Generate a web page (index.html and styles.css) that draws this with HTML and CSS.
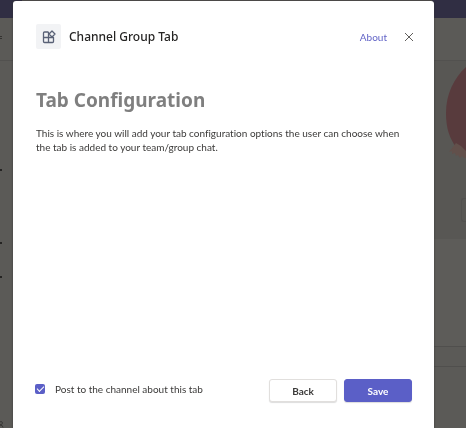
FILE: index.html
```html
<!DOCTYPE html>
<html lang="en">
<head>
<meta charset="utf-8">
<meta name="viewport" content="width=device-width, initial-scale=1">
<title>Channel Group Tab</title>
<link rel="stylesheet" href="styles.css">
</head>
<body>
<div class="backdrop" aria-hidden="true">
  <div class="topbar"><div class="search"></div></div>
  <div class="toolbar"><span class="toolbar-mark"></span></div>
  <div class="workspace">
    <div class="rail">
      <span class="mark mark-one"></span>
      <span class="mark mark-two"></span>
      <span class="mark mark-three"></span>
      <svg class="person" viewBox="0 0 4 7"><path d="M0 .8Q2.5 0 2.5 2T0 3.5M0 4.2Q3 4 3 6.5" fill="none" stroke="#3a3937"/></svg>
    </div>
    <div class="stage">
      <svg class="balloon" viewBox="0 0 32 120">
        <path d="M32 6C20 17 12 33 12 52C12 68 16 78 22 86C25 90 28 94 32 97Z" fill="#583b3d"/>
        <path d="M22 82L27 85L32 90V97L30 97L28 95L26 97L24 94L22 95L21 92L18 93L18 90L15 91Z" fill="#62504b"/>
      </svg>
      <div class="tile"></div>
    </div>
    <div class="feed"></div>
    <div class="compose"></div>
  </div>
</div>
<main class="dialog" role="dialog" aria-labelledby="app-name">
  <header class="dialog-header">
    <span class="app-icon">
      <svg viewBox="0 0 14 14" fill="none" stroke="#596176" stroke-width="1.3" stroke-linejoin="round">
        <path d="M6.500 2H2.500Q1.500 2 1.500 3V11.500Q1.500 12.500 2.500 12.500H10.500Q11.500 12.500 11.500 11.500V7.500H1.500M6.500 2V12.500"/>
        <path d="M10 1L13 4L10 7L7 4Z" fill="#f2f3f5"/>
      </svg>
    </span>
    <h1 class="app-name" id="app-name">Channel Group Tab</h1>
    <a class="about" href="#about">About</a>
    <button class="close" type="button" aria-label="Close">
      <svg viewBox="0 0 10 10"><path d="M1 1L9 9M9 1L1 9" stroke="#605e5c" stroke-width="1"/></svg>
    </button>
  </header>
  <section class="content">
    <h2 class="title">Tab Configuration</h2>
    <p class="description">This is where you will add your tab configuration options the user can choose when the tab is added to your team/group chat.</p>
  </section>
  <footer class="dialog-footer">
    <label class="post" for="post"><input class="check" type="checkbox" id="post" checked>Post to the channel about this tab</label>
    <button class="button" type="button">Back</button>
    <button class="button primary" type="button">Save</button>
  </footer>
</main>
</body>
</html>
```
FILE: styles.css
```css
* { box-sizing: border-box; }
body {
  margin: 0;
  font-family: Lato, "Open Sans", sans-serif;
  font-size: 10px;
  line-height: 14px;
  font-variant-ligatures: none;
  color: #3b3a39;
  background: #5b5a57;
  overflow: hidden;
}
.backdrop { display: flex; flex-direction: column; height: 100vh; }
.topbar { height: 18px; padding: 0 34px 0 22px; background: #302e43; }
.search { height: 6px; background: #55524f; }
.toolbar { height: 43px; padding-top: 18px; background: #5b5a57; border-bottom: 1px solid #52514f; }
.toolbar-mark { display: block; width: 2px; height: 3px; border-top: 1px solid #343331; border-bottom: 1px solid #343331; }
.workspace {
  flex: 1;
  display: grid;
  grid-template-columns: 13px 1fr 32px;
  grid-template-rows: 178px 107px 21px 1fr;
}
.rail { grid-column: 1; grid-row: 1 / -1; display: flex; flex-direction: column; }
.mark { width: 2px; height: 2px; background: #242322; }
.mark-one { margin-top: 108px; }
.mark-two { margin-top: 71px; }
.mark-three { margin-top: 32px; }
.person { width: 4px; height: 7px; margin-top: auto; }
.stage { grid-column: 3; grid-row: 1; display: flex; flex-direction: column; background: #585754; }
.balloon { width: 32px; height: 120px; }
.tile { width: 5px; height: 24px; margin: 17px 0 0 auto; border: 1px solid #52514f; border-right: 0; border-radius: 3px 0 0 3px; }
.feed { grid-column: 3; grid-row: 2; background: #5d5c59; }
.compose { grid-column: 3; grid-row: 3; border: solid #504f4d; border-width: 1px 0; }
.dialog {
  position: fixed;
  inset: 1px 32px 0 13px;
  display: flex;
  flex-direction: column;
  padding: 23px 22px 26px 23px;
  background: #fff;
  border-radius: 3px 3px 0 0;
  box-shadow: 0 0 2px #333;
}
.dialog-header { display: flex; align-items: center; }
.app-icon { display: grid; place-items: center; width: 25px; height: 25px; margin-right: 8px; background: #f2f3f5; border-radius: 2px; }
.app-icon svg { width: 14px; height: 14px; }
.app-name { flex: 1; margin: 0; font-family: "Noto Sans", sans-serif; font-size: 12px; line-height: 18px; font-weight: 500; color: #252423; }
.about { color: #6264c7; text-decoration: none; }
.close { display: grid; place-items: center; width: 18px; height: 18px; margin-left: 13px; margin-right: -6px; padding: 0; border: 0; background: none; }
.close svg { width: 10px; height: 10px; }
.content { flex: 1; }
.title { margin: 37px 0 0; font-family: "Noto Sans", sans-serif; font-size: 19px; line-height: 28px; font-weight: 700; color: #7f7f7f; }
.description { margin: 12px 0 0; }
.dialog-footer { display: flex; align-items: center; gap: 7px; }
.post { flex: 1; display: flex; align-items: center; gap: 10px; margin-bottom: 4px; }
.check {
  appearance: none;
  width: 10px;
  height: 10px;
  margin: 0 0 0 -1px;
  border-radius: 2px;
  background: #5b5fc7;
  display: grid;
  place-items: center;
}
.check::before { content: ""; width: 6px; height: 3px; border: solid #fff; border-width: 0 0 1px 1px; transform: translateY(-1px) rotate(-45deg); }
.button {
  width: 68px;
  height: 23px;
  padding: 0;
  border: 1px solid #e1dfdd;
  border-radius: 3px;
  background: #fff;
  color: #3b3a39;
  font: 700 10px/14px Lato, "Open Sans", sans-serif;
  box-shadow: 0 1px 1px #ddd;
}
.primary { border-color: #5b5fc7; background: #5b5fc7; color: #fff; }
```
